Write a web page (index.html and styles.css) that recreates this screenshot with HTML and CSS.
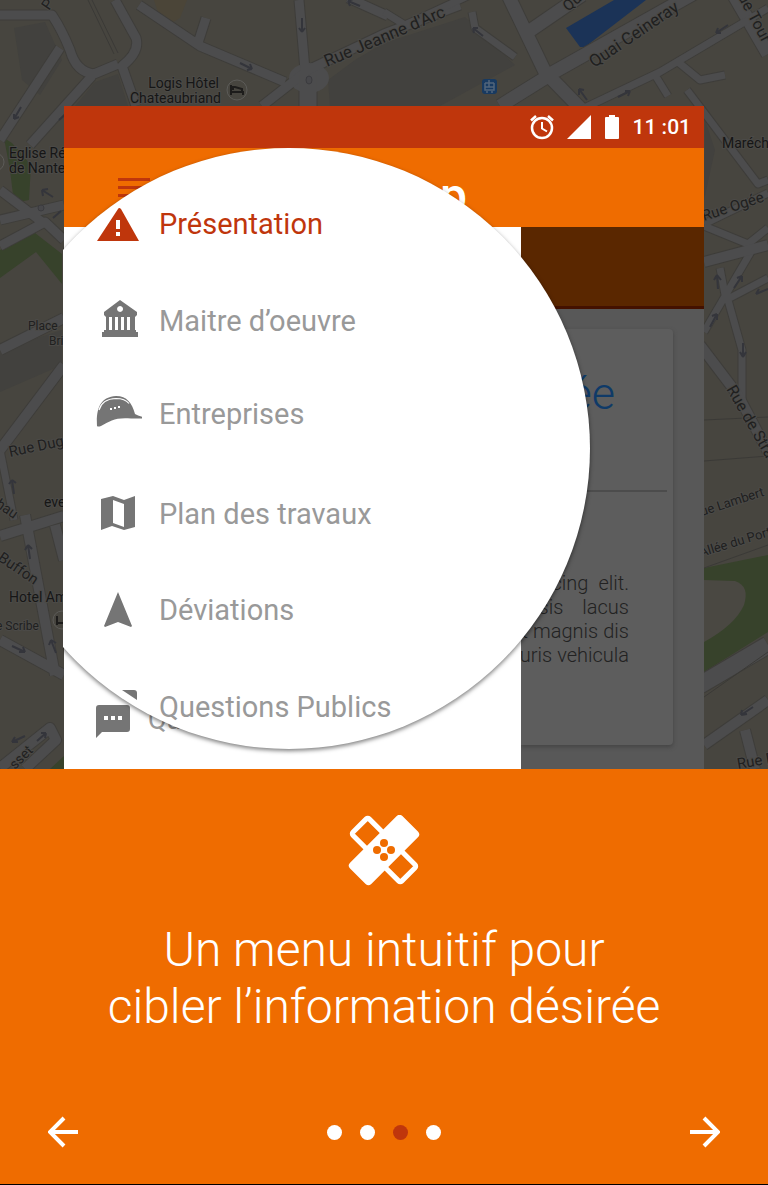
FILE: index.html
```html
<!DOCTYPE html>
<html lang="fr">
<head>
<meta charset="utf-8">
<meta name="viewport" content="width=device-width, initial-scale=1">
<title>Un menu intuitif</title>
<link rel="stylesheet" href="styles.css">
</head>
<body>
<main class="onboarding">
  <section class="hero">
    <svg class="map" viewBox="0 0 768 769" preserveAspectRatio="xMidYMin slice" aria-hidden="true">
      <rect width="768" height="769" fill="#47453f"/>
      <g fill="#42413e">
        <path d="M14 28 45 22 62 60 40 95 22 80zM95 82 118 74 128 106 75 106zM355 60 384 43 465 17 515 65 440 106 330 106 328 80zM0 350 62 330V365L0 392zM705 120 715 150 704 200z"/>
      </g>
      <path d="M154 0H187L180 18 163 28z" fill="#4b4538"/>
      <g fill="#37422b">
        <path d="M0 250 35 233 62 254V284L36 252 0 278zM4 138 12 143 31 165 29 200 14 203 10 170zM704 568 768 555V632L704 672zM50 769 64 756V769z"/>
      </g>
      <path d="M704 580 735 581Q750 586 744 605 735 625 704 642z" fill="#4a4842"/>
      <path d="M566 28 614 0H646L585 47H580z" fill="#1b3357"/>
      <g class="road-edge">
        <path stroke-width="11" d="M0 15H52Q62 30 70 50 76 72 94 74L118 64M115 0 136 38Q140 52 122 66L136 106M139 5 200 46 285 82M198 43 206 18M299 0 305 70M262 106 308 70 384 34 460 5M348 -2 388 16M60 48 0 140M92 76 30 145M0 190 42 222M0 220 64 205M0 246 45 222 64 240"/>
        <path stroke-width="15" d="M508 -5 545 72 582 110M545 77 700 -10M545 78 500 106M528 32 582 -5M728 -15 768 54"/>
        <path stroke-width="9" d="M384 12 405 25 470 -5M472 12 475 28 515 57M580 110 660 72 768 8M655 75 668 96M678 62 700 80 725 75M687 90 758 184 768 180M704 224 768 193M704 226 748 244 768 228M720 268 726 300M704 332 752 250M726 300 768 278M728 300 742 350V400M0 450 14 520"/>
        <path stroke-width="12" d="M704 262 768 245M700 345 738 395 768 452M0 350 64 318M64 365 0 450M0 536 64 516M25 515 55 675M0 640 64 675M0 768 50 728 56 740 25 769M55 525 64 560M704 745 768 700M745 730 755 769"/>
        <path stroke-width="19" d="M700 685 768 645M308 75V106"/>
      </g>
      <ellipse cx="309" cy="78" rx="20" ry="15" fill="#4c4c4d"/>
      <g class="road">
        <path stroke-width="9" d="M0 15H52Q62 30 70 50 76 72 94 74L118 64M115 0 136 38Q140 52 122 66L136 106M139 5 200 46 285 82M198 43 206 18M299 0 305 70M262 106 308 70 384 34 460 5M348 -2 388 16M60 48 0 140M92 76 30 145M0 190 42 222M0 220 64 205M0 246 45 222 64 240"/>
        <path stroke-width="13" d="M508 -5 545 72 582 110M545 77 700 -10M545 78 500 106M528 32 582 -5M728 -15 768 54"/>
        <path stroke-width="7" d="M384 12 405 25 470 -5M472 12 475 28 515 57M580 110 660 72 768 8M655 75 668 96M678 62 700 80 725 75M687 90 758 184 768 180M704 224 768 193M704 226 748 244 768 228M720 268 726 300M704 332 752 250M726 300 768 278M728 300 742 350V400M0 450 14 520"/>
        <path stroke-width="10" d="M704 262 768 245M700 345 738 395 768 452M0 350 64 318M64 365 0 450M0 536 64 516M25 515 55 675M0 640 64 675M0 768 50 728 56 740 25 769M55 525 64 560M704 745 768 700M745 730 755 769"/>
        <path stroke-width="17" d="M700 685 768 645M308 75V106"/>
      </g>
      <ellipse cx="309" cy="80" rx="3" ry="4" fill="#47474a" stroke="#3b3b3e"/>
      <circle cx="41" cy="208" r="3" fill="#47474a" stroke="#3b3b3e"/>
      <path d="M88 0 114 54M92 0 118 53M704 420 768 417M704 461 768 456M704 568 768 545M704 697 768 652" stroke="#3b3a37" fill="none"/>
      <g class="direction">
        <path d="M240 63 252 69M252 69l-5 1M252 69l-2-5M302 18v14M302 32l-3-4M302 32l3-4M348 1 360 6M348 1l5-2M348 1l2 5M21 107l-7 12M14 119v-5M14 119l5-2M67 113l-8 7M42 190 53 197M42 190l1 6M42 190l6-1M53 218l8-7M473 28l10 8M473 28l1 5M473 28l5 0M579 89l8 11M579 89v6M579 89l5 1M618 97l12-6M630 91l-5 0M630 91l-2 5M716 33l12-8M716 33l2-5M716 33l5 0M717 275l1 14M717 275l-3 5M717 275l4 5M742 276l-8 12M742 276v6M742 276l-5 2M756 294l12-5M756 294l3-5M717 314l-7 13M717 314v6M717 314l-5 2M743 343v14M743 357l-3-5M743 357l3-5M12 480l2 14M12 480l-3 4M12 480l4 3M28 545l2 14M28 545l-3 5M28 545l4 4M51 640l5 13M51 640l-2 5M51 640l5 3M12 646l13 6M25 652l-6 0M25 652l-2-5M12 742l13-6M12 742l3-5M12 742l6 0M46 733l-9 8M46 733l-5 0M46 733l-1 5M741 715l12-8M741 715l1-5M741 715l6-1"/>
      </g>
      <g class="map-label">
        <text x="219" y="88" text-anchor="end">Logis Hôtel</text>
        <text x="221" y="103" text-anchor="end">Chateaubriand</text>
        <text x="9" y="158">Eglise Ré</text>
        <text x="9" y="173">de Nante</text>
        <text x="722" y="148">Maréch</text>
        <text x="9" y="602">Hotel Am</text>
        <text x="44" y="507">eve</text>
      </g>
      <g class="map-label street">
        <text transform="translate(327 67) rotate(-23)" font-size="17">Rue Jeanne d'Arc</text>
        <text transform="translate(594 68) rotate(-34)" font-size="17">Quai Ceineray</text>
        <text transform="translate(568 12) rotate(-40)" font-size="15">Quai</text>
        <text transform="translate(733 -12) rotate(62)" font-size="16">Rue Tour</text>
        <text transform="translate(704 221) rotate(-18)" font-size="15">Rue Ogée</text>
        <text transform="translate(726 389) rotate(60)" font-size="16">Rue de Stra</text>
        <text transform="translate(702 516) rotate(-18)" font-size="13">ue Lambert</text>
        <text transform="translate(701 557) rotate(-17)" font-size="13">Allée du Port M</text>
        <text transform="translate(738 769) rotate(-10)" font-size="15">Rue F</text>
        <text transform="translate(49 11) rotate(-55)" font-size="15">P'</text>
        <text x="28" y="330" font-size="12">Place</text>
        <text x="49" y="345" font-size="12">Bri</text>
        <text transform="translate(10 457) rotate(-12)" font-size="15">Rue Dug</text>
        <text transform="translate(-5 506) rotate(35)" font-size="14">hau</text>
        <text transform="translate(-3 560) rotate(34)" font-size="15">Buffon</text>
        <text x="-4" y="630" font-size="12">e Scribe</text>
        <text transform="translate(15 770) rotate(-45)" font-size="14">sset</text>
      </g>
      <g fill="none" stroke="#5c5b58">
        <circle cx="237" cy="90" r="10"/><circle cx="62" cy="620" r="9"/><circle cx="-5" cy="162" r="9"/>
      </g>
      <path d="M231 85v10M231 92h12v3M233 90v-3h2l7 2v3M57 616v9M57 623h9" stroke="#1d1c1b" stroke-width="2" fill="none"/>
      <rect x="482" y="79" width="15" height="15" rx="3" fill="#183a61"/>
      <path d="M485 83h9M485 83v7h9v-7M485 87h9M489 80v7M486 92h2M491 92h2" stroke="#52657b" stroke-width="1.5" fill="none"/>
    </svg>

    <div class="phone">
      <div class="status-bar">
        <svg width="26" height="26" viewBox="0 0 26 26" fill="none" stroke="#fff" aria-hidden="true">
          <circle cx="13" cy="14" r="10" stroke-width="2.500"/>
          <path d="M13 8v6.500l5 3" stroke-width="2"/>
          <path d="M2 6.500 7 2M24 6.500 19 2" stroke-width="2.500"/>
        </svg>
        <svg class="signal" width="24" height="24" viewBox="0 0 24 24" aria-hidden="true"><path d="M24 0v24H0z" fill="#fff"/></svg>
        <svg width="14" height="24" viewBox="0 0 14 24" aria-hidden="true"><path d="M4 0h6v2h3q1 0 1 1v20q0 1-1 1H1q-1 0-1-1V3q0-1 1-1h3z" fill="#fff"/></svg>
        <span class="clock">11 :01</span>
      </div>
      <header class="app-bar">
        <button class="menu-button" type="button" aria-label="Menu"><span></span><span></span><span></span></button>
        <span class="app-title">p</span>
      </header>
      <div class="app-body">
        <div class="drawer">
          <a class="drawer-link" href="#questions">
            <svg width="34" height="34" viewBox="0 0 34 34" aria-hidden="true"><path d="M3 0h28q3 0 3 3v21q0 3-3 3H6l-6 6V3q0-3 3-3z" fill="#757575"/><path d="M8 11h4v4H8zM15 11h4v4h-4zM22 11h4v4h-4z" fill="#fff"/></svg>
            <span>Qu</span>
          </a>
        </div>
        <div class="content">
          <div class="tab-strip"></div>
          <article class="card">
            <h2 class="card-title">ée</h2>
            <p class="card-text">
              <span class="line roomy"><span>adipiscing</span><span>elit.</span></span>
              <span class="line airy"><span>sis</span><span>lacus</span></span>
              <span class="line"><span>et</span><span>magnis</span><span>dis</span></span>
              <span class="line"><span>Mauris</span><span>vehicula</span></span>
            </p>
          </article>
        </div>
      </div>

      <div class="lens-frame">
        <nav class="lens" aria-label="Menu principal">
          <a class="lens-link active" href="#presentation">
            <svg class="icon" viewBox="0 0 46 44" aria-hidden="true"><path d="M22 7q1-2 3 0L43 39H1z" fill="#bf360c"/><path d="M20 18h4v9h-4zM20 30h4v4h-4z" fill="#fff"/></svg>
            <span>Présentation</span>
          </a>
          <a class="lens-link" href="#maitre">
            <svg class="icon" viewBox="0 0 46 44" aria-hidden="true"><path fill-rule="evenodd" d="M24 1 41 13v3l-2 2v13h1v2h2v5H6v-5h2v-2h2V18l-2-2v-3zM24 7a3 3 0 1 0 .1 0zM13 18v13h3V18zM19 18v13h3V18zM25 18v13h3V18zM31 18v13h3V18z" fill="#757575"/></svg>
            <span>Maitre d’oeuvre</span>
          </a>
          <a class="lens-link" href="#entreprises">
            <svg class="icon" viewBox="0 0 46 44" aria-hidden="true"><path d="M1 34C0 17 4 5 20 4c11 0 16 7 19 18q3 2 8 3v1.500H35C20 25 14 29 5 34q-3 1-4 0z" fill="#757575"/><path d="M3 18Q6 7 20 6.500q9 0 13 5" fill="none" stroke="#fff" stroke-width="1.200"/><path d="M14 16h2v2h-2zM18 15h2v2h-2zM22 14h2v2h-2z" fill="#fff"/></svg>
            <span>Entreprises</span>
          </a>
          <a class="lens-link" href="#plan">
            <svg class="icon" viewBox="0 0 46 44" aria-hidden="true"><path fill-rule="evenodd" d="M5 7 17 4l11 4L39 4v31l-11 3-12-4L5 38zM17 8v23l11 4V12z" fill="#757575"/></svg>
            <span>Plan des travaux</span>
          </a>
          <a class="lens-link" href="#deviations">
            <svg class="icon" viewBox="0 0 46 44" aria-hidden="true"><path d="M22 4 36 38l-1 1-13-5-13 5-1-1z" fill="#757575"/></svg>
            <span>Déviations</span>
          </a>
          <a class="lens-link" href="#questions">
            <svg class="icon" viewBox="0 0 46 44" aria-hidden="true"><path d="M26 5h12q3 0 3 3v7z" fill="#757575"/></svg>
            <span>Questions Publics</span>
          </a>
        </nav>
      </div>
    </div>
  </section>

  <section class="intro">
    <svg class="bandage" width="72" height="72" viewBox="0 0 72 72" aria-hidden="true">
      <g transform="rotate(45 36 35)"><rect x="1.500" y="23.500" width="69" height="23" rx="2" fill="none" stroke="#fff" stroke-width="5"/></g>
      <g transform="rotate(-45 36 35)"><rect x="-1" y="20" width="74" height="30" rx="4" fill="#fff"/></g>
      <g fill="#ef6c00"><circle cx="36" cy="28" r="4"/><circle cx="36" cy="42" r="4"/><circle cx="29" cy="35" r="4"/><circle cx="43" cy="35" r="4"/></g>
    </svg>
    <h1 class="headline">Un menu intuitif pour<br>cibler l’information désirée</h1>
    <nav class="pager" aria-label="Étapes">
      <button class="arrow" type="button" aria-label="Précédent"><svg width="32" height="32" viewBox="0 0 32 32"><path d="M16 2 2 16l14 14M2 16h28" fill="none" stroke="#fff" stroke-width="4"/></svg></button>
      <div class="dots">
        <button class="dot" type="button" aria-label="Étape 1"></button>
        <button class="dot" type="button" aria-label="Étape 2"></button>
        <button class="dot current" type="button" aria-label="Étape 3" aria-current="step"></button>
        <button class="dot" type="button" aria-label="Étape 4"></button>
      </div>
      <button class="arrow" type="button" aria-label="Suivant"><svg width="32" height="32" viewBox="0 0 32 32"><path d="M16 2l14 14-14 14M30 16H2" fill="none" stroke="#fff" stroke-width="4"/></svg></button>
    </nav>
  </section>
</main>
</body>
</html>
```
FILE: styles.css
```css
* { box-sizing: border-box; }
body { margin: 0; font-family: Roboto, "Liberation Sans", sans-serif; background: #ef6c00; }
button { border: 0; padding: 0; background: none; font: inherit; cursor: pointer; }
a { color: inherit; text-decoration: none; }
svg { display: block; flex: none; }

.hero { position: relative; overflow: hidden; background: #47453f; padding: 106px 64px 0; }
.map { position: absolute; inset: 0; width: 100%; height: 100%; }
.road-edge { fill: none; stroke: #3e3d3a; stroke-linejoin: round; }
.road { fill: none; stroke: #4c4c4d; stroke-linejoin: round; }
.direction { fill: none; stroke: #34353b; stroke-width: 2; }
.map-label { fill: #161616; font-size: 14px; stroke: #4b4a47; stroke-width: 2px; paint-order: stroke; }
.street { fill: #20201f; }

.phone { position: relative; }
.status-bar { display: flex; align-items: center; justify-content: flex-end; gap: 14px; height: 42px; padding-right: 13px; background: #bf360c; color: #fff; }
.signal { margin-left: -2px; }
.clock { font-size: 21px; font-weight: 500; line-height: 26px; }
.app-bar { display: flex; align-items: flex-start; justify-content: space-between; height: 79px; padding: 30px 237px 0 54px; background: #ef6c00; }
.menu-button { display: grid; gap: 5px; width: 32px; }
.menu-button span { height: 3px; background: #bf360c; }
.app-title { color: #fff; font-size: 48px; font-weight: 500; line-height: 36px; }

.app-body { display: flex; min-height: 542px; }
.drawer { display: flex; flex: 0 0 457px; flex-direction: column; justify-content: flex-end; padding: 0 32px 30px; background: #fff; }
.drawer-link { display: flex; align-items: flex-start; gap: 18px; color: #999; font-size: 27px; line-height: 30px; }
.content { flex: 1; min-width: 0; overflow: hidden; background: #585858; }
.tab-strip { height: 82px; background: #5a2700; border-bottom: 3px solid #431100; }
.card { min-height: 416px; margin: 20px 31px 24px 0; background: #5d5d5d; border-radius: 0 4px 4px 0; box-shadow: 0 2px 4px #444; }
.card-title { margin: 0 6px 0 0; padding: 38px 52px 70px 0; border-bottom: 2px solid #4c4c4c; color: #0f3a68; font-size: 45px; font-weight: 300; line-height: 53px; text-align: right; }
.card-text { margin: 0; padding: 79px 44px 0 0; color: #222; font-size: 20px; font-weight: 300; line-height: 24px; }
.line { display: flex; justify-content: flex-end; gap: 5px; }
.roomy { gap: 10px; }
.airy { gap: 19px; }

.lens-frame { position: absolute; inset: 42px 0 0 -1px; overflow: hidden; }
.lens { position: absolute; top: 0; left: -75px; display: grid; grid-template-rows: 97px 93px 100px 96px 97px 97px; align-items: start; width: 602px; height: 601px; padding: 54px 0 0 108px; overflow: hidden; border-radius: 50%; background: #fff; box-shadow: 0 2px 4px rgba(0, 0, 0, .5); }
.lens-link { display: flex; align-items: center; gap: 17px; color: #999; font-size: 29px; line-height: 44px; }
.active { color: #bf360c; }
.icon { width: 46px; height: 44px; }

.intro { padding: 46px 48px 36px; background: #ef6c00; border-bottom: 1px solid #000; color: #fff; }
.bandage { margin: 0 auto; }
.headline { margin: 34px 0 81px; font-size: 48px; font-weight: 300; line-height: 57px; text-align: center; }
.pager { display: flex; align-items: center; justify-content: space-between; }
.dots { display: flex; gap: 18px; }
.dot { width: 15px; height: 15px; border-radius: 50%; background: #fff; }
.current { background: #bf360c; }
```
